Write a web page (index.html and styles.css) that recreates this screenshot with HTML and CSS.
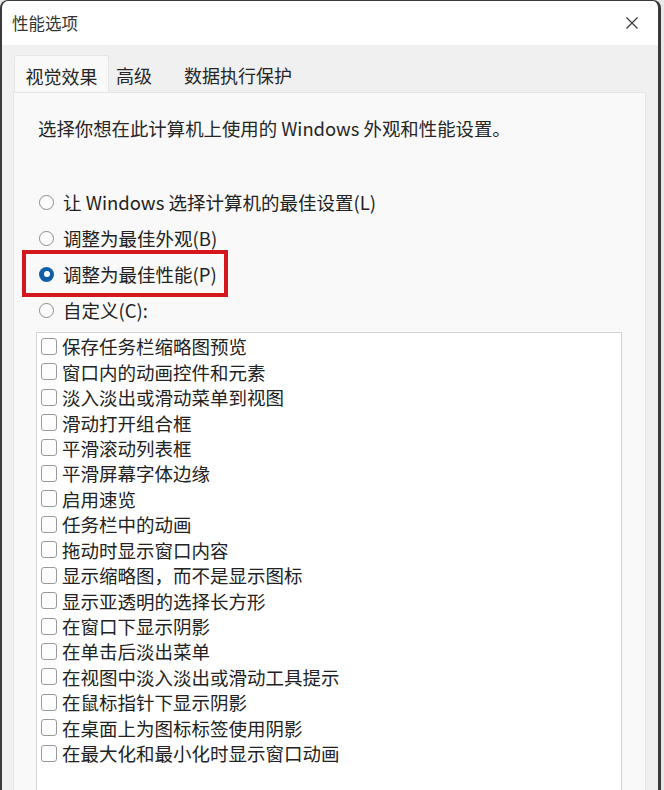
FILE: index.html
```html
<!DOCTYPE html>
<html lang="zh-CN">
<head>
<meta charset="utf-8">
<title>性能选项</title>
<link rel="stylesheet" href="styles.css">
</head>
<body>
<div class="window">
  <div class="titlebar">
    <span class="title">性能选项</span>
    <span class="close">
      <svg width="14" height="14" viewBox="0 0 14 14"><path d="M1.5 1.5 L12.5 12.5 M12.5 1.5 L1.5 12.5" stroke="#3c3c3c" stroke-width="1.3" fill="none"/></svg>
    </span>
  </div>
  <div class="content">
    <div class="tabs">
      <div class="tab tab-active">视觉效果</div>
      <div class="tab tab-second">高级</div>
      <div class="tab tab-third">数据执行保护</div>
    </div>
    <div class="panel">
      <p class="intro">选择你想在此计算机上使用的 Windows 外观和性能设置。</p>
      <div class="radios">
        <div class="radio-row"><span class="radio"></span><span>让 Windows 选择计算机的最佳设置(L)</span></div>
        <div class="radio-row"><span class="radio"></span><span>调整为最佳外观(B)</span></div>
        <div class="radio-row radio-row-marked"><span class="radio radio-checked"></span><span>调整为最佳性能(P)</span><span class="highlight"></span></div>
        <div class="radio-row"><span class="radio"></span><span>自定义(C):</span></div>
      </div>
      <div class="list">
        <div class="item"><span class="check"></span><span>保存任务栏缩略图预览</span></div>
        <div class="item"><span class="check"></span><span>窗口内的动画控件和元素</span></div>
        <div class="item"><span class="check"></span><span>淡入淡出或滑动菜单到视图</span></div>
        <div class="item"><span class="check"></span><span>滑动打开组合框</span></div>
        <div class="item"><span class="check"></span><span>平滑滚动列表框</span></div>
        <div class="item"><span class="check"></span><span>平滑屏幕字体边缘</span></div>
        <div class="item"><span class="check"></span><span>启用速览</span></div>
        <div class="item"><span class="check"></span><span>任务栏中的动画</span></div>
        <div class="item"><span class="check"></span><span>拖动时显示窗口内容</span></div>
        <div class="item"><span class="check"></span><span>显示缩略图，而不是显示图标</span></div>
        <div class="item"><span class="check"></span><span>显示亚透明的选择长方形</span></div>
        <div class="item"><span class="check"></span><span>在窗口下显示阴影</span></div>
        <div class="item"><span class="check"></span><span>在单击后淡出菜单</span></div>
        <div class="item"><span class="check"></span><span>在视图中淡入淡出或滑动工具提示</span></div>
        <div class="item"><span class="check"></span><span>在鼠标指针下显示阴影</span></div>
        <div class="item"><span class="check"></span><span>在桌面上为图标标签使用阴影</span></div>
        <div class="item"><span class="check"></span><span>在最大化和最小化时显示窗口动画</span></div>
      </div>
    </div>
  </div>
</div>
</body>
</html>
```

FILE: styles.css
```css
html, body {
  margin: 0;
  padding: 0;
  height: 790px;
  overflow: hidden;
  background: #e9e9e9;
}

body {
  font-family: "Noto Sans CJK SC", "Noto Sans", sans-serif;
  color: #222;
}

.window {
  width: 661px;
  height: 790px;
  box-sizing: border-box;
  border-left: 2px solid #3a3a3a;
  border-right: 3px solid #3a3a3a;
  border-top: 1px solid #3a3a3a;
  border-radius: 8px 8px 0 0;
  background: #f0f0f0;
  display: flex;
  flex-direction: column;
  overflow: hidden;
}

.titlebar {
  height: 44px;
  flex: none;
  background: #ffffff;
  display: flex;
  align-items: center;
  justify-content: space-between;
  padding: 0 19px 0 10px;
  border-radius: 7px 7px 0 0;
}

.title {
  font-size: 16.5px;
  line-height: 24px;
  color: #333;
}

.close {
  display: flex;
  align-items: center;
  justify-content: center;
  width: 14px;
  height: 14px;
}

.content {
  flex: 1;
  padding: 10px 12px 0 11px;
  display: flex;
  flex-direction: column;
}

.tabs {
  display: flex;
  height: 37px;
  flex: none;
}

.tab {
  font-size: 18px;
  line-height: 37px;
  color: #262626;
  padding-top: 2px;
  box-sizing: border-box;
}

.tab-active {
  width: 95px;
  margin-left: 1px;
  text-align: center;
  background: #f9f9f9;
  border: 1px solid #e6e6e6;
  border-bottom: none;
  border-radius: 3px 3px 0 0;
}

.tab-second {
  padding-left: 7px;
  padding-right: 15px;
}

.tab-third {
  padding-left: 17px;
}

.panel {
  flex: 1;
  background: #f9f9f9;
  border: 1px solid #e6e6e6;
  border-bottom: none;
  padding: 0 23px 0 24px;
}

.intro {
  margin: 23px 0 0;
  font-size: 18.4px;
  line-height: 24px;
  color: #262626;
}

.radios {
  margin-top: 44px;
  display: flex;
  flex-direction: column;
}

.radio-row {
  height: 36px;
  display: flex;
  align-items: center;
  gap: 9px;
  font-size: 18.5px;
  color: #222;
}

.radio-row-marked {
  position: relative;
}

.radio {
  width: 15px;
  height: 15px;
  margin-left: 1px;
  box-sizing: border-box;
  border: 1px solid #8a8a8a;
  border-radius: 50%;
  background: #fdfdfd;
  flex: none;
}

.radio-checked {
  border: none;
  background: #0f5fa8;
  display: flex;
  align-items: center;
  justify-content: center;
}

.radio-checked::after {
  content: "";
  width: 6px;
  height: 6px;
  border-radius: 50%;
  background: #ffffff;
}

.highlight {
  position: absolute;
  left: -16px;
  top: -6px;
  width: 206px;
  height: 47px;
  box-sizing: border-box;
  border: 4px solid #d4161d;
  pointer-events: none;
}

.list {
  margin: 4px 0 0 -2px;
  height: 480px;
  background: #ffffff;
  border: 1px solid #d4d4d4;
  padding: 0.5px 0 0 4px;
}

.item {
  height: 25.44px;
  display: flex;
  align-items: center;
  gap: 5px;
  font-size: 18.5px;
  color: #222;
}

.check {
  width: 16px;
  height: 17px;
  box-sizing: border-box;
  border: 1px solid #9a9a9a;
  border-radius: 3px;
  background: #fdfdfd;
  flex: none;
}
```
